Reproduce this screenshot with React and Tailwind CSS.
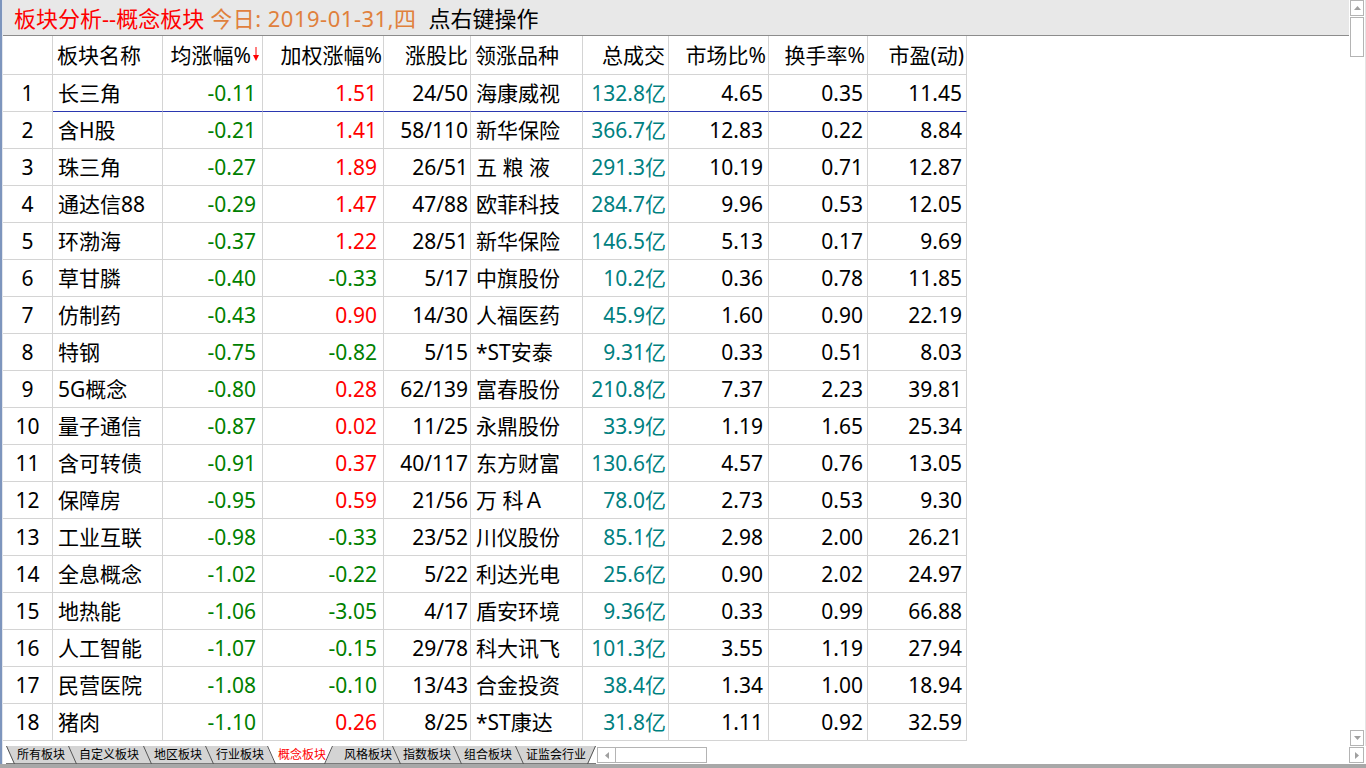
const ROWS = [
  ['长三角', '-0.11', '1.51', '24/50', '海康威视', '132.8亿', '4.65', '0.35', '11.45'],
  ['含H股', '-0.21', '1.41', '58/110', '新华保险', '366.7亿', '12.83', '0.22', '8.84'],
  ['珠三角', '-0.27', '1.89', '26/51', '五 粮 液', '291.3亿', '10.19', '0.71', '12.87'],
  ['通达信88', '-0.29', '1.47', '47/88', '欧菲科技', '284.7亿', '9.96', '0.53', '12.05'],
  ['环渤海', '-0.37', '1.22', '28/51', '新华保险', '146.5亿', '5.13', '0.17', '9.69'],
  ['草甘膦', '-0.40', '-0.33', '5/17', '中旗股份', '10.2亿', '0.36', '0.78', '11.85'],
  ['仿制药', '-0.43', '0.90', '14/30', '人福医药', '45.9亿', '1.60', '0.90', '22.19'],
  ['特钢', '-0.75', '-0.82', '5/15', '*ST安泰', '9.31亿', '0.33', '0.51', '8.03'],
  ['5G概念', '-0.80', '0.28', '62/139', '富春股份', '210.8亿', '7.37', '2.23', '39.81'],
  ['量子通信', '-0.87', '0.02', '11/25', '永鼎股份', '33.9亿', '1.19', '1.65', '25.34'],
  ['含可转债', '-0.91', '0.37', '40/117', '东方财富', '130.6亿', '4.57', '0.76', '13.05'],
  ['保障房', '-0.95', '0.59', '21/56', '万 科Ａ', '78.0亿', '2.73', '0.53', '9.30'],
  ['工业互联', '-0.98', '-0.33', '23/52', '川仪股份', '85.1亿', '2.98', '2.00', '26.21'],
  ['全息概念', '-1.02', '-0.22', '5/22', '利达光电', '25.6亿', '0.90', '2.02', '24.97'],
  ['地热能', '-1.06', '-3.05', '4/17', '盾安环境', '9.36亿', '0.33', '0.99', '66.88'],
  ['人工智能', '-1.07', '-0.15', '29/78', '科大讯飞', '101.3亿', '3.55', '1.19', '27.94'],
  ['民营医院', '-1.08', '-0.10', '13/43', '合金投资', '38.4亿', '1.34', '1.00', '18.94'],
  ['猪肉', '-1.10', '0.26', '8/25', '*ST康达', '31.8亿', '1.11', '0.92', '32.59'],
]

const TABS = [
  ['所有板块', 62],
  ['自定义板块', 75],
  ['地区板块', 62],
  ['行业板块', 62],
  ['概念板块', 66],
  ['风格板块', 59],
  ['指数板块', 61],
  ['组合板块', 62],
  ['证监会行业', 81],
]
const ACTIVE_TAB = 4

const GRID = 'grid grid-cols-[50px_110px_100px_121px_87px_112px_86px_100px_99px_99px] w-[964px]'

// red for up, green for down
const upDown = (v) => (v.startsWith('-') ? 'text-[#008000]' : 'text-[#ff0000]')

function SortArrow() {
  return (
    <svg width="6" height="14" viewBox="0 0 6 14" className="ml-[2px] mb-[2px] shrink-0">
      <line x1="3" y1="0" x2="3" y2="10" stroke="#ff0000" strokeWidth="1" />
      <polygon points="0,8 6,8 3,14" fill="#ff0000" />
    </svg>
  )
}

function HeaderRow() {
  const cell = 'flex h-[39px] items-center whitespace-nowrap border-r border-b border-[#d4d4d4]'
  return (
    <div className={GRID}>
      <div className={cell} />
      <div className={`${cell} pl-[4px]`}>板块名称</div>
      <div className={`${cell} justify-end pr-[3px]`}>
        均涨幅%<SortArrow />
      </div>
      <div className={`${cell} justify-end pr-[1px]`}>加权涨幅%</div>
      <div className={`${cell} justify-end pr-[2px]`}>涨股比</div>
      <div className={`${cell} pl-[4px]`}>领涨品种</div>
      <div className={`${cell} justify-end pr-[3px]`}>总成交</div>
      <div className={`${cell} justify-end pr-[2px]`}>市场比%</div>
      <div className={`${cell} justify-end pr-[2px]`}>换手率%</div>
      <div className={`${cell} justify-end pr-[2px]`}>市盈(动)</div>
    </div>
  )
}

function DataRow({ row, index }) {
  const [name, avg, weighted, ratio, leader, amount, market, turnover, pe] = row
  const selected = index === 0
  const base = 'flex h-[37px] items-center whitespace-nowrap border-r border-b border-[#d4d4d4]'
  const cell = selected ? `${base} border-b-[#2b38b0]` : base
  return (
    <div className={GRID}>
      <div className={`${base} justify-center`}>{index + 1}</div>
      <div className={`${cell} pl-[5px]`}>{name}</div>
      <div className={`${cell} justify-end pr-[6px] ${upDown(avg)}`}>{avg}</div>
      <div className={`${cell} justify-end pr-[6px] ${upDown(weighted)}`}>{weighted}</div>
      <div className={`${cell} justify-end pr-[2px]`}>{ratio}</div>
      <div className={`${cell} pl-[5px] whitespace-pre`}>{leader}</div>
      <div className={`${cell} justify-end pr-[2px] text-[#008080]`}>{amount}</div>
      <div className={`${cell} justify-end pr-[5px]`}>{market}</div>
      <div className={`${cell} justify-end pr-[4px]`}>{turnover}</div>
      <div className={`${cell} justify-end pr-[4px]`}>{pe}</div>
    </div>
  )
}

function Tab({ label, w, index }) {
  const active = index === ACTIVE_TAB
  const afterActive = index === ACTIVE_TAB + 1
  const first = index === 0
  const last = index === TABS.length - 1
  const h = 18
  return (
    <div className="relative flex h-[18px] shrink-0 items-center pl-[11px]" style={{ width: w }}>
      <svg className="absolute inset-0" width={w} height={h}>
        <rect x="0" y="0" width={w} height={h} fill="#d4d4d4" />
        {first && <polygon points={`0,0 8,${h} 0,${h}`} fill="#ffffff" />}
        {last && <polygon points={`${w},0 ${w},${h} ${w - 8},${h}`} fill="#ffffff" />}
        {active && <polygon points={`0,0 ${w},0 ${w - 8},${h} 8,${h}`} fill="#ffffff" />}
        <line x1="0" y1={h - 0.5} x2={w} y2={h - 0.5} stroke="#7a7a7a" />
        {!afterActive && <line x1="0.5" y1="0" x2="8.5" y2={h} stroke="#555555" />}
        {(active || last) && <line x1={w - 8.5} y1={h} x2={w - 0.5} y2="0" stroke="#555555" />}
      </svg>
      <span className={`relative text-[12px] leading-none ${active ? 'text-[#ff0000]' : 'text-black'}`}>
        {label}
      </span>
    </div>
  )
}

function ArrowBox({ dir, className }) {
  const pts = {
    up: '2,6 9,6 5.5,2',
    down: '2,2 9,2 5.5,6',
    left: '6,2 6,9 2,5.5',
    right: '2,2 2,9 6,5.5',
  }[dir]
  const size = dir === 'up' || dir === 'down' ? [11, 8] : [8, 11]
  return (
    <div className={`flex items-center justify-center border border-[#b4b4b4] bg-white ${className}`}>
      <svg width={size[0]} height={size[1]}>
        <polygon points={pts} fill="#a0a0a0" />
      </svg>
    </div>
  )
}

export default function App() {
  return (
    <div className="flex h-[768px] w-[1366px] flex-col overflow-hidden bg-white font-['Noto_Sans','Noto_Sans_CJK_SC',sans-serif] text-[21px] leading-none text-black">
      <div className="flex h-[764px]">
        <div className="flex w-[3px] shrink-0">
          <div className="w-[2px] bg-[#7d95bd]" />
          <div className="w-[1px] bg-[#e3e6ec]" />
        </div>
        <div className="flex w-[1363px] flex-col">
          <div className="flex h-[746px]">
            <div className="flex w-[1346px] flex-col">
              <div className="flex h-[36px] shrink-0 items-center whitespace-nowrap border-b border-[#8c8c8c] bg-[#e8e8e8] pl-[11px] text-[22px]">
                <span className="text-[#ff0000]">板块分析--概念板块</span>
                <span className="ml-[6px] tracking-[0.5px] text-[#e0803c]">今日: 2019-01-31,四</span>
                <span className="ml-[12px]">点右键操作</span>
              </div>
              <HeaderRow />
              {ROWS.map((row, i) => (
                <DataRow key={i} row={row} index={i} />
              ))}
            </div>
            <div className="flex w-[17px] shrink-0">
              <div className="ml-[1px] flex w-[14px] flex-col">
                <ArrowBox dir="up" className="h-[16px]" />
                <div className="mt-[1px] h-[40px] border border-[#b4b4b4] bg-white" />
                <div className="flex-1" />
                <ArrowBox dir="down" className="h-[16px]" />
              </div>
              <div className="ml-[1px] w-[1px] bg-[#e4e4e4]" />
            </div>
          </div>
          <div className="flex h-[18px] items-center">
            <div className="flex pl-[3px]">
              {TABS.map(([label, w], i) => (
                <Tab key={label} label={label} w={w} index={i} />
              ))}
            </div>
            <div className="ml-[1px] flex h-[16px] flex-1 pr-[2px]">
              <ArrowBox dir="left" className="w-[19px]" />
              <div className="w-[91px] border border-l-0 border-[#b4b4b4] bg-white" />
              <div className="flex-1" />
              <ArrowBox dir="right" className="w-[15px]" />
            </div>
          </div>
        </div>
      </div>
      <div className="h-[4px] bg-[#a8a8a8]" />
    </div>
  )
}
